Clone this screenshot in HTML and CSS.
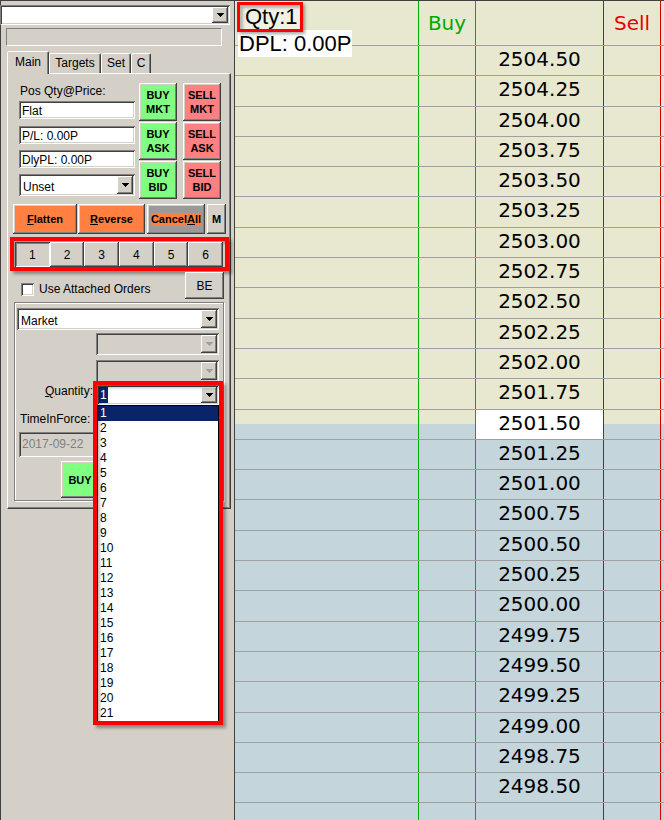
FILE: index.html
```html
<!DOCTYPE html>
<html>
<head>
<meta charset="utf-8">
<link rel="stylesheet" href="styles.css">
</head>
<body>
<div class="app">
  <div class="left">
    <div class="combo top-combo">
      <span class="combo-text"></span>
      <span class="arrow-btn raised"><svg class="tri" width="7" height="4" viewBox="0 0 7 4"><path d="M0 0h7v1h-1v1h-1v1h-1v1h-1v-1h-1v-1h-1v-1h-1z"/></svg></span>
    </div>
    <div class="status-field"></div>
    <div class="tabs">
      <div class="tab active t-main">Main</div>
      <div class="tab t-targets">Targets</div>
      <div class="tab t-set">Set</div>
      <div class="tab t-c">C</div>
    </div>
    <div class="panel">
      <div class="trade">
        <div class="info">
          <div class="info-label">Pos Qty@Price:</div>
          <div class="field f-flat">Flat</div>
          <div class="field f-pl">P/L: 0.00P</div>
          <div class="field f-dly">DlyPL: 0.00P</div>
          <div class="combo unset">
            <span class="combo-text">Unset</span>
            <span class="arrow-btn raised"><svg class="tri" width="7" height="4" viewBox="0 0 7 4"><path d="M0 0h7v1h-1v1h-1v1h-1v1h-1v-1h-1v-1h-1v-1h-1z"/></svg></span>
          </div>
        </div>
        <div class="btn raised tb buy">BUY<br>MKT</div>
        <div class="btn raised tb sell">SELL<br>MKT</div>
        <div class="btn raised tb buy">BUY<br>ASK</div>
        <div class="btn raised tb sell">SELL<br>ASK</div>
        <div class="btn raised tb buy">BUY<br>BID</div>
        <div class="btn raised tb sell">SELL<br>BID</div>
      </div>

      <div class="actions">
        <div class="btn raised act orange w-flat"><span><u>F</u>latten</span></div>
        <div class="btn raised act orange w-rev"><span><u>R</u>everse</span></div>
        <div class="btn raised act w-cancel"><span class="hl">Cancel<u>A</u>ll</span></div>
        <div class="btn raised act w-m">M</div>
      </div>

      <div class="redbox nums">
        <div class="btn pressed num">1</div>
        <div class="btn raised num">2</div>
        <div class="btn raised num">3</div>
        <div class="btn raised num">4</div>
        <div class="btn raised num">5</div>
        <div class="btn raised num">6</div>
      </div>

      <div class="attached">
        <div class="chk"></div>
        <div class="chk-label">Use Attached Orders</div>
        <div class="btn raised be">BE</div>
      </div>

      <div class="group">
        <div class="combo market">
          <span class="combo-text">Market</span>
          <span class="arrow-btn raised"><svg class="tri" width="7" height="4" viewBox="0 0 7 4"><path d="M0 0h7v1h-1v1h-1v1h-1v1h-1v-1h-1v-1h-1v-1h-1z"/></svg></span>
        </div>
        <div class="combo disabled d1">
          <span class="combo-text"></span>
          <span class="arrow-btn raised"><svg class="tri gray" width="7" height="4" viewBox="0 0 7 4"><path d="M0 0h7v1h-1v1h-1v1h-1v1h-1v-1h-1v-1h-1v-1h-1z"/></svg></span>
        </div>
        <div class="combo disabled d2">
          <span class="combo-text"></span>
          <span class="arrow-btn raised"><svg class="tri gray" width="7" height="4" viewBox="0 0 7 4"><path d="M0 0h7v1h-1v1h-1v1h-1v1h-1v-1h-1v-1h-1v-1h-1z"/></svg></span>
        </div>
        <div class="qty-row">
          <div class="qty-label"><u>Q</u>uantity:</div>
          <div class="qty-combo">
            <span class="sel">1</span>
            <span class="arrow-btn raised"><svg class="tri" width="7" height="4" viewBox="0 0 7 4"><path d="M0 0h7v1h-1v1h-1v1h-1v1h-1v-1h-1v-1h-1v-1h-1z"/></svg></span>
            <div class="dd-list">
              <div class="dd-item on">1</div>
              <div class="dd-item">2</div>
              <div class="dd-item">3</div>
              <div class="dd-item">4</div>
              <div class="dd-item">5</div>
              <div class="dd-item">6</div>
              <div class="dd-item">7</div>
              <div class="dd-item">8</div>
              <div class="dd-item">9</div>
              <div class="dd-item">10</div>
              <div class="dd-item">11</div>
              <div class="dd-item">12</div>
              <div class="dd-item">13</div>
              <div class="dd-item">14</div>
              <div class="dd-item">15</div>
              <div class="dd-item">16</div>
              <div class="dd-item">17</div>
              <div class="dd-item">18</div>
              <div class="dd-item">19</div>
              <div class="dd-item">20</div>
              <div class="dd-item">21</div>
            </div>
            <div class="redbox dd-frame"></div>
          </div>
        </div>
        <div class="tif-label">TimeInForce:</div>
        <div class="date-field">2017-09-22</div>
        <div class="btn raised tb buy buy-order">BUY</div>
      </div>
    </div>
  </div>

  <div class="right">
    <div class="row head">
      <div class="cell c1">
        <div class="dpl">DPL: 0.00P</div>
        <div class="qty">Qty:1</div>
      </div>
      <div class="cell c2 buyh">Buy</div>
      <div class="cell c3"></div>
      <div class="cell c4 sellh">Sell</div>
    </div>
    <div class="row"><div class="cell c1"></div><div class="cell c2"></div><div class="cell c3 price">2504.50</div><div class="cell c4"></div></div>
    <div class="row"><div class="cell c1"></div><div class="cell c2"></div><div class="cell c3 price">2504.25</div><div class="cell c4"></div></div>
    <div class="row"><div class="cell c1"></div><div class="cell c2"></div><div class="cell c3 price">2504.00</div><div class="cell c4"></div></div>
    <div class="row"><div class="cell c1"></div><div class="cell c2"></div><div class="cell c3 price">2503.75</div><div class="cell c4"></div></div>
    <div class="row"><div class="cell c1"></div><div class="cell c2"></div><div class="cell c3 price">2503.50</div><div class="cell c4"></div></div>
    <div class="row"><div class="cell c1"></div><div class="cell c2"></div><div class="cell c3 price">2503.25</div><div class="cell c4"></div></div>
    <div class="row"><div class="cell c1"></div><div class="cell c2"></div><div class="cell c3 price">2503.00</div><div class="cell c4"></div></div>
    <div class="row"><div class="cell c1"></div><div class="cell c2"></div><div class="cell c3 price">2502.75</div><div class="cell c4"></div></div>
    <div class="row"><div class="cell c1"></div><div class="cell c2"></div><div class="cell c3 price">2502.50</div><div class="cell c4"></div></div>
    <div class="row"><div class="cell c1"></div><div class="cell c2"></div><div class="cell c3 price">2502.25</div><div class="cell c4"></div></div>
    <div class="row"><div class="cell c1"></div><div class="cell c2"></div><div class="cell c3 price">2502.00</div><div class="cell c4"></div></div>
    <div class="row"><div class="cell c1"></div><div class="cell c2"></div><div class="cell c3 price">2501.75</div><div class="cell c4"></div></div>
    <div class="row"><div class="cell c1"></div><div class="cell c2"></div><div class="cell c3 price cur">2501.50</div><div class="cell c4"></div></div>
    <div class="row"><div class="cell c1"></div><div class="cell c2"></div><div class="cell c3 price">2501.25</div><div class="cell c4"></div></div>
    <div class="row"><div class="cell c1"></div><div class="cell c2"></div><div class="cell c3 price">2501.00</div><div class="cell c4"></div></div>
    <div class="row"><div class="cell c1"></div><div class="cell c2"></div><div class="cell c3 price">2500.75</div><div class="cell c4"></div></div>
    <div class="row"><div class="cell c1"></div><div class="cell c2"></div><div class="cell c3 price">2500.50</div><div class="cell c4"></div></div>
    <div class="row"><div class="cell c1"></div><div class="cell c2"></div><div class="cell c3 price">2500.25</div><div class="cell c4"></div></div>
    <div class="row"><div class="cell c1"></div><div class="cell c2"></div><div class="cell c3 price">2500.00</div><div class="cell c4"></div></div>
    <div class="row"><div class="cell c1"></div><div class="cell c2"></div><div class="cell c3 price">2499.75</div><div class="cell c4"></div></div>
    <div class="row"><div class="cell c1"></div><div class="cell c2"></div><div class="cell c3 price">2499.50</div><div class="cell c4"></div></div>
    <div class="row"><div class="cell c1"></div><div class="cell c2"></div><div class="cell c3 price">2499.25</div><div class="cell c4"></div></div>
    <div class="row"><div class="cell c1"></div><div class="cell c2"></div><div class="cell c3 price">2499.00</div><div class="cell c4"></div></div>
    <div class="row"><div class="cell c1"></div><div class="cell c2"></div><div class="cell c3 price">2498.75</div><div class="cell c4"></div></div>
    <div class="row"><div class="cell c1"></div><div class="cell c2"></div><div class="cell c3 price">2498.50</div><div class="cell c4"></div></div>
    <div class="row"><div class="cell c1"></div><div class="cell c2"></div><div class="cell c3 price"></div><div class="cell c4"></div></div>
  </div>
</div>
</body>
</html>
```

FILE: styles.css
```css
* { box-sizing: border-box; margin: 0; padding: 0; }
html, body { width: 664px; height: 820px; overflow: hidden; }
body {
  background: #d4d0c8;
  font-family: "Liberation Sans", Arial, sans-serif;
  font-size: 12px;
  color: #000;
}
.app {
  display: flex;
  height: 820px;
  border-top: 1px solid #404040;
  border-left: 1px solid #404040;
}

/* ---------- Windows classic bevels ---------- */
.raised {
  box-shadow: inset -1px -1px #404040, inset 1px 1px #fff, inset -2px -2px #808080, inset 2px 2px #d4d0c8;
}
.pressed {
  box-shadow: inset 1px 1px #404040, inset -1px -1px #fff, inset 2px 2px #808080, inset -2px -2px #d4d0c8;
}
.sunken, .field, .combo, .qty-combo, .chk, .date-field {
  box-shadow: inset 1px 1px #808080, inset -1px -1px #fff, inset 2px 2px #404040, inset -2px -2px #d4d0c8;
}

/* ---------- Left panel ---------- */
.left {
  width: 233px;
  flex: none;
  display: flex;
  flex-direction: column;
  align-items: flex-start;
}
.combo {
  display: flex;
  background: #fff;
  padding: 2px;
}
.combo-text {
  flex: 1;
  padding: 4px 0 0 2px;
  line-height: 14px;
  white-space: nowrap;
  overflow: hidden;
}
.arrow-btn {
  width: 16px;
  flex: none;
  display: flex;
  align-items: center;
  justify-content: center;
  background: #d4d0c8;
}
.tri { display: block; fill: #000; }
.tri.gray { fill: #a0a0a0; }

.top-combo { margin: 4px 0 0 -1px; width: 230px; height: 20px; }
.status-field {
  margin: 3px 0 0 5px;
  width: 216px;
  height: 18px;
  border: 1px solid;
  border-color: #808080 #fff #fff #808080;
}

.tabs {
  display: flex;
  align-items: flex-end;
  margin: 5px 0 0 6px;
  height: 22px;
}
.tab {
  height: 20px;
  text-align: center;
  line-height: 19px;
  border: 1px solid;
  border-bottom: none;
  border-color: #fff #404040 transparent #fff;
  box-shadow: inset -1px 0 #808080;
  border-radius: 2px 2px 0 0;
  background: #d4d0c8;
}
.tab.active {
  height: 23px;
  margin-bottom: -1px;
  position: relative;
  z-index: 1;
  line-height: 20px;
}
.t-main { width: 42px; }
.t-targets { width: 52px; }
.t-set { width: 30px; }
.t-c { width: 20px; }

.panel {
  margin-left: 6px;
  width: 224px;
  height: 436px;
  border: 1px solid;
  border-color: #fff #404040 #404040 #fff;
  box-shadow: inset -1px -1px #808080;
  padding: 9px 0 0 5px;
  display: flex;
  flex-direction: column;
  align-items: flex-start;
}

.trade {
  display: grid;
  grid-template-columns: 116px 38px 40px;
  grid-template-rows: repeat(3, 38px);
  column-gap: 4px;
  row-gap: 1px;
  margin-left: 6px;
}
.info { grid-row: 1 / 4; display: flex; flex-direction: column; }
.info-label { height: 14px; line-height: 14px; margin-top: 1px; padding-left: 1px; }
.field {
  height: 18px;
  background: #fff;
  padding: 3px 0 0 3px;
  line-height: 14px;
  white-space: nowrap;
}
.f-flat { margin-top: 3px; }
.f-pl { margin-top: 7px; }
.f-dly { margin-top: 6px; }
.unset { margin-top: 6px; height: 22px; }

.btn {
  display: flex;
  align-items: center;
  justify-content: center;
  text-align: center;
  background: #d4d0c8;
}
.tb { font-weight: bold; font-size: 11px; line-height: 14px; }
.buy { background: #80ff80; }
.sell { background: #ff8080; justify-self: end; width: 38px; }

.actions { display: flex; margin-top: 5px; height: 30px; }
.act { font-weight: bold; font-size: 11px; }
.orange { background: #ff8040; }
.w-flat { width: 64px; }
.w-rev { width: 67px; margin-left: 1px; }
.w-cancel { width: 58px; margin-left: 2px; background: #9a9a9a; }
.hl { background: #ff8040; line-height: 13px; }
.w-m { width: 19px; margin-left: 2px; }

.redbox {
  border: 4px solid #ff0000;
  box-shadow: 3px 3px 3px rgba(0,0,0,0.35), inset 3px 3px 3px rgba(0,0,0,0.25);
}
.nums {
  margin: 3px 0 0 -3px;
  width: 219px;
  height: 34px;
  padding: 1px 2px 0 1px;
  display: grid;
  grid-template-columns: repeat(6, 1fr);
}
.num { height: 25px; font-size: 12px; }

.attached {
  display: flex;
  align-items: flex-start;
  width: 212px;
  height: 27px;
  margin-top: 1px;
}
.chk { width: 13px; height: 13px; background: #fff; margin: 11px 0 0 8px; }
.chk-label { margin: 10px 0 0 5px; line-height: 14px; }
.be { margin-left: auto; margin-right: 1px; width: 39px; height: 27px; }

.group {
  margin: 3px 0 0 1px;
  width: 210px;
  height: 199px;
  border: 1px solid #808080;
  box-shadow: inset 1px 1px #fff, 1px 1px #fff;
  padding: 5px 3px 0 2px;
  display: flex;
  flex-direction: column;
  align-items: flex-start;
}
.market { width: 202px; height: 22px; }
.disabled { background: #d4d0c8; width: 123px; height: 22px; align-self: flex-end; margin-right: 1px; }
.d1 { margin-top: 3px; }
.d2 { margin-top: 5px; }

.qty-row { display: flex; align-items: flex-start; margin-top: 3px; height: 20px; }
.qty-label { width: 76px; text-align: right; line-height: 14px; margin-top: -1px; }
.qty-combo {
  position: relative;
  margin-left: 4px;
  width: 122px;
  height: 20px;
  background: #fff;
  display: flex;
  padding: 2px;
}
.sel {
  background: #0a246a;
  color: #fff;
  padding: 0 1px;
  height: 16px;
  line-height: 16px;
}
.qty-combo .arrow-btn { margin-left: auto; }
.dd-list {
  position: absolute;
  top: 20px;
  left: 0;
  width: 122px;
  height: 317px;
  background: #fff;
  border: 1px solid #000;
  z-index: 1;
}
.dd-item { height: 15px; line-height: 15px; padding-left: 2px; }
.dd-item.on { background: #0a246a; color: #fff; }
.dd-frame {
  position: absolute;
  top: -4px;
  left: -4px;
  width: 130px;
  height: 344px;
  z-index: 2;
}

.tif-label { margin-top: 7px; padding-left: 3px; line-height: 14px; }
.date-field {
  margin: 6px 0 0 2px;
  width: 110px;
  height: 25px;
  padding-left: 3px;
  line-height: 24px;
  color: #808080;
  background: #d4d0c8;
}
.buy-order { margin: 4px 0 0 44px; width: 38px; height: 37px; }

/* ---------- Right ladder ---------- */
.right {
  flex: none;
  width: 430px;
  border-left: 1px solid #404040;
  background: linear-gradient(#e8e8d0 0 423px, #c5d5dc 423px);
  overflow: hidden;
}
.row {
  display: grid;
  grid-template-columns: 184px 57px 128px 57px;
  height: 30.3px;
  border-bottom: 1px solid #a0a0a0;
}
.row.head { height: 45px; }
.cell { border-right: 1px solid #00b000; }
.c3, .c4 { border-right-color: #d40000; }
.c1 { position: relative; }
.buyh, .sellh {
  font-family: "DejaVu Sans", sans-serif;
  font-size: 20px;
  line-height: 44px;
  text-align: center;
}
.buyh { color: #00a800; }
.sellh { color: #e80000; }
.price {
  font-family: "DejaVu Sans", sans-serif;
  font-size: 20px;
  line-height: 27px;
  text-align: center;
}
.cur { background: #fff; }

.dpl {
  position: absolute;
  left: 3px;
  top: 29px;
  width: 114px;
  height: 27px;
  background: #fff;
  font-size: 22px;
  line-height: 28px;
  padding-left: 1px;
  white-space: nowrap;
  z-index: 1;
}
.qty {
  position: absolute;
  left: 2px;
  top: 1px;
  width: 66px;
  height: 30px;
  border: 3px solid #ff0000;
  background: #f2f1e4;
  box-shadow: 2px 2px 3px rgba(0,0,0,0.35), inset 3px 3px 3px rgba(0,0,0,0.25);
  font-size: 22px;
  line-height: 23px;
  padding-left: 5px;
  white-space: nowrap;
  z-index: 2;
}
```
